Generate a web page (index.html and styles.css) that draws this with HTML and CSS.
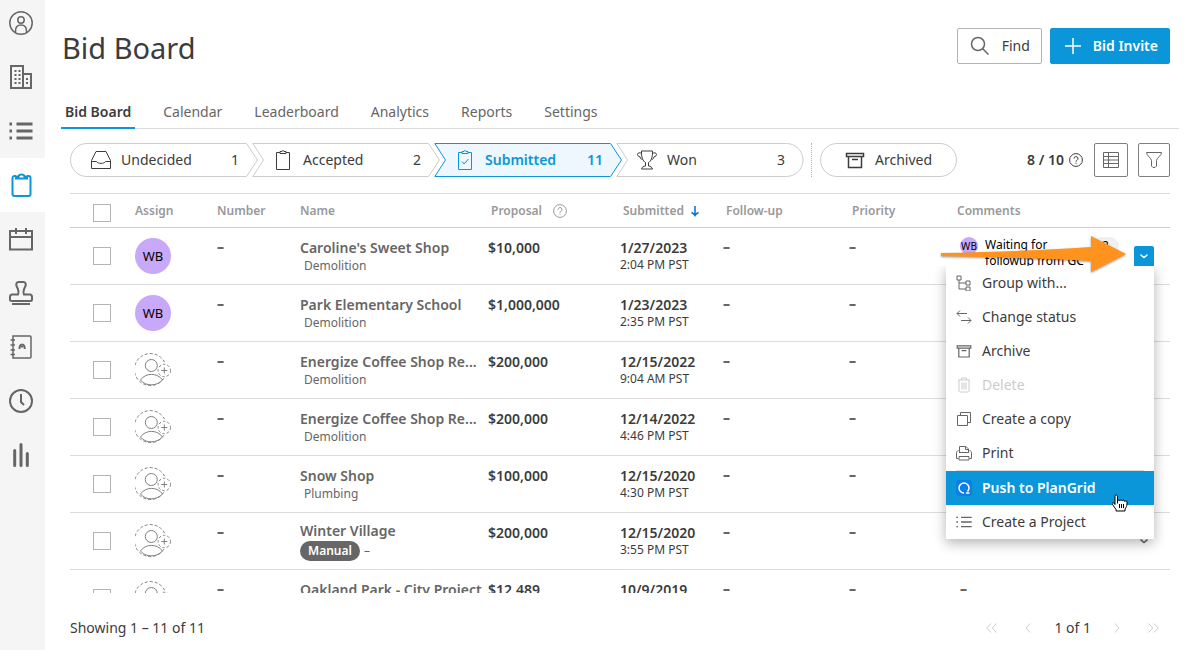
FILE: index.html
```
<!DOCTYPE html>
<html lang="en">
  <head>
    <meta charset="UTF-8" />
    <meta name="viewport" content="width=device-width, initial-scale=1.0" />
    <title>Bid Board</title>
    <link rel="stylesheet" href="styles.css">
  </head>

  <body>
    <!-- shared icons -->
    <svg class="sprite" aria-hidden="true">
      <symbol id="i-help" viewBox="0 0 14 14">
        <circle cx="7" cy="7" r="6.4" />
        <path d="M5 5.6a2 2 0 1 1 3 1.7c-.7.4-1 .7-1 1.4M7 9.8v1" />
      </symbol>
      <symbol id="i-person" viewBox="0 0 36 36">
        <path stroke-dasharray="3 2" d="M29.6 10.200A16 16 0 1 0 29 26" />
        <circle cx="16.300" cy="13.500" r="6" />
        <path d="M5.500 28c5-7.500 17-7.500 22 0M5.500 28c5 6.500 16 6.500 22 0" />
        <circle stroke-dasharray="2.500 2" cx="29.300" cy="18.500" r="6.200" />
        <path d="M29.300 15.500v6M26.300 18.500h6" />
      </symbol>
      <symbol id="i-chevron" viewBox="0 0 10 10">
        <path d="M1.500 3.700 5 6.500l3.500-2.800" />
      </symbol>
      <symbol id="i-archive" viewBox="0 0 20 20">
        <path d="M1.500 3.500h17v3h-17zM3.500 6.500v11h13v-11M7 9.500h6" />
      </symbol>
      <symbol id="i-list" viewBox="0 0 24 24">
        <path d="M7.500 5h16M7.500 12h16M7.500 19h16M.5 5h2.500M.5 12h2.500M.5 19h2.500" />
      </symbol>
    </svg>

    <nav class="sidebar">
      <a href="#" aria-label="Account"><svg viewBox="0 0 24 24" class="thin"><circle cx="12" cy="12" r="11.200" /><circle cx="12" cy="9" r="3.200" /><path d="M6.500 21.500v-1.500c0-4 2.500-6 5.500-6s5.500 2 5.500 6v1.500" /></svg></a>
      <a href="#" aria-label="Companies"><svg viewBox="0 0 24 24"><path d="M2 1h12v22H2zM14 9h8v14h-8" /><path stroke-dasharray="2 2" d="M6.500 5v14M10.500 5v14M18 13v6" /></svg></a>
      <a href="#" aria-label="Lists"><svg class="list"><use href="#i-list" /></svg></a>
      <a href="#" aria-label="Bid Board" class="active"><svg viewBox="0 0 24 24"><path d="M7 3H5.500a2 2 0 0 0-2 2v16a2 2 0 0 0 2 2h14a2 2 0 0 0 2-2V5a2 2 0 0 0-2-2H18" /><path d="M7 5.500V3.500h2.500C10 .7 15 .7 15.500 3.500H18v2z" /></svg></a>
      <a href="#" aria-label="Calendar"><svg viewBox="0 0 24 24"><path d="M1 4h22v18.500H1zM1 10h22M7 1v6M17 1v6" /></svg></a>
      <a href="#" aria-label="Approvals"><svg viewBox="0 0 24 24"><path d="M9 13.500c1.500-3 .3-5-1.500-8.500-.8-2 .2-4 2-4h5c1.800 0 2.800 2 2 4-1.800 3.500-3 5.500-1.500 8.500h6c1.200 0 2 1 2 2.500v2.500c0 1-.8 1.500-2 1.500H3c-1.200 0-2-.5-2-1.500V16c0-1.500.8-2.500 2-2.500zM3 23h18" /></svg></a>
      <a href="#" aria-label="Contacts"><svg viewBox="0 0 24 24" class="thin"><path d="M4 1h17a1 1 0 0 1 1 1v20a1 1 0 0 1-1 1H4zM1.500 5h4.500M1.500 10h4.500M1.500 15h4.500M1.500 19.500h4.500" /><path stroke-width="2" d="M10.500 14c-.3-6 5.500-6 5.200 0M13 11v1.500" /></svg></a>
      <a href="#" aria-label="History"><svg viewBox="0 0 24 24"><circle cx="12" cy="12" r="11" /><path d="M12 5v8l3 3" /></svg></a>
      <a href="#" aria-label="Reports"><svg viewBox="0 0 24 24" class="thick"><path d="M5.700 7.500v15M12 1.500v21M18.300 10.500v12" /></svg></a>
    </nav>

    <div class="page">
      <header class="page-head">
        <h1>Bid Board</h1>
        <div class="head-actions">
          <button class="btn"><svg viewBox="0 0 20 20"><circle cx="8" cy="8" r="6.500" /><path d="m12.700 12.700 5.800 5.800" /></svg>Find</button>
          <button class="btn primary"><svg viewBox="0 0 20 20"><path d="M10 2v16M2 10h16" /></svg>Bid Invite</button>
        </div>
      </header>

      <nav class="tabs">
        <a href="#" class="active">Bid Board</a>
        <a href="#">Calendar</a>
        <a href="#">Leaderboard</a>
        <a href="#">Analytics</a>
        <a href="#">Reports</a>
        <a href="#">Settings</a>
      </nav>

      <div class="content">
        <div class="toolbar">
          <div class="stages">
            <button class="stage">
              <svg class="shape" viewBox="0 0 188 34" preserveAspectRatio="none"><path d="M17 .5H176.500L187.500 17 176.500 33.500H17A16.500 16.500 0 0 1 17 .5z" /></svg>
              <svg class="icon" viewBox="0 0 20 20"><path d="M.5 10.500 5 1.500h10l4.500 9v8H.5zM.5 11.500h5c1 2.500 8 2.500 9 0h5" /></svg>
              <span>Undecided</span><span class="count">1</span>
            </button>
            <button class="stage">
              <svg class="shape" viewBox="0 0 188 34" preserveAspectRatio="none"><path d="M.8 .5H176.500L187.500 17 176.500 33.500H.8L11.500 17z" /></svg>
              <svg class="icon" viewBox="0 0 20 20"><path d="M7 2.500H3.500v17h13v-17H13M7 1.500h2c0-1.300 2-1.300 2 0h2v2H7z" /></svg>
              <span>Accepted</span><span class="count">2</span>
            </button>
            <button class="stage current">
              <svg class="shape" viewBox="0 0 188 34" preserveAspectRatio="none"><path d="M.8 .5H176.500L187.500 17 176.500 33.500H.8L11.500 17z" /></svg>
              <svg class="icon" viewBox="0 0 20 20"><path d="M7 2.500H3.500v17h13v-17H13M7 1.500h2c0-1.300 2-1.300 2 0h2v2H7zM7 11.500l2 2.500 4.500-5" /></svg>
              <span>Submitted</span><span class="count">11</span>
            </button>
            <button class="stage">
              <svg class="shape" viewBox="0 0 188 34" preserveAspectRatio="none"><path d="M.8 .5H170.500A16.500 16.500 0 0 1 170.500 33.500H.8L11.500 17z" /></svg>
              <svg class="icon" viewBox="0 0 20 20"><path d="M4.500 1h11c.3 6-1.500 10.500-4 11.500v3.500c2 .3 3.500 1 4 3h-11c.5-2 2-2.700 4-3v-3.500C6 11.500 4.200 7 4.500 1zM4.500 3.500c-1.500-1.200-4-.8-4 1 0 2.500 3 1.500 3 3.500 0 1 1 1.500 2 1M15.500 3.500c1.500-1.200 4-.8 4 1 0 2.500-3 1.500-3 3.500 0 1-1 1.500-2 1" /></svg>
              <span>Won</span><span class="count">3</span>
            </button>
          </div>
          <button class="archived"><svg class="icon"><use href="#i-archive" /></svg>Archived</button>
          <div class="tools">
            <span class="usage">8 / 10</span>
            <svg class="help"><use href="#i-help" /></svg>
            <button class="tool" aria-label="Columns"><svg viewBox="0 0 18 18"><path d="M1.500 1.500h15v15h-15zM6.500 1.500v15M1.500 5.500h15M1.500 9h15M1.500 12.500h15" /></svg></button>
            <button class="tool filter" aria-label="Filter"><svg viewBox="0 0 18 18"><path d="M1.500 1.500h15c.2 3-5 5.500-5 8v5.500l-1.500 1.500H8l-1.500-1.500V9.500c0-2.500-5.200-5-5-8z" /></svg></button>
          </div>
        </div>

        <div class="table-wrap">
          <table>
            <colgroup>
              <col class="c-check"><col class="c-assign"><col class="c-number"><col class="c-name"><col class="c-proposal"><col class="c-submitted"><col class="c-follow"><col class="c-priority"><col class="c-comments"><col class="c-menu">
            </colgroup>
            <thead>
              <tr>
                <th class="check"><input type="checkbox" aria-label="Select all"></th>
                <th>Assign</th>
                <th>Number</th>
                <th>Name</th>
                <th class="inset">Proposal <svg class="help"><use href="#i-help" /></svg></th>
                <th class="inset">Submitted <svg class="sort" viewBox="0 0 10 12"><path d="M5 1v9.500M1.500 7.500c1.500.7 2.800 1.700 3.500 3 .7-1.300 2-2.300 3.500-3" /></svg></th>
                <th class="inset">Follow-up</th>
                <th class="inset">Priority</th>
                <th>Comments</th>
                <th></th>
              </tr>
            </thead>
            <tbody>
              <tr>
                <td class="check"><input type="checkbox" aria-label="Select Caroline's Sweet Shop"></td>
                <td class="assign"><span class="avatar">WB</span></td>
                <td class="muted none">–</td>
                <td class="name"><a href="#">Caroline's Sweet Shop</a><small>Demolition</small></td>
                <td>$10,000</td>
                <td>1/27/2023<small>2:04 PM PST</small></td>
                <td class="muted none">–</td>
                <td class="muted none">–</td>
                <td class="comments">
                  <div class="comment">
                    <span class="avatar small">WB</span>
                    <span class="comment-text">Waiting for followup from GC</span>
                    <span class="badge">2</span>
                  </div>
                </td>
                <td class="row-menu">
                  <div class="dropdown">
                    <button class="toggle open" aria-label="Row actions"><svg><use href="#i-chevron" /></svg></button>
                    <div class="menu">
                      <button><svg viewBox="0 0 16 16"><path d="M1 1h4v4H1zM3 5v9h7M3 8h7M10 6h4v4h-4zM10 12h4v4h-4z" /></svg>Group with...</button>
                      <button><svg viewBox="0 0 16 16"><path d="M4 1.500l-3 3 3 3M1 4.500h10M12 8.500l3 3-3 3M15 11.500H5" /></svg>Change status</button>
                      <button><svg class="archive"><use href="#i-archive" /></svg>Archive</button>
                      <button disabled><svg viewBox="0 0 16 16"><path d="M2 3h12M5.500 3V1h5v2M3 3v10.500c0 1 .5 1.500 1.500 1.500h7c1 0 1.500-.5 1.500-1.500V3M6 5.500v7M8 5.500v7M10 5.500v7" /></svg>Delete</button>
                      <button><svg viewBox="0 0 16 16"><path d="M1.500 4.500h10v10h-10zM4.500 4.500v-3h10v10h-3" /></svg>Create a copy</button>
                      <button><svg viewBox="0 0 16 16"><path d="M3.500 7V1.500H10l2.500 2.500v3M9.500 1.500v3h3M3 7.500h10M2.500 5.500C1 6 .5 7 .5 8v5.500h2M13.500 5.500C15 6 15.500 7 15.500 8v5.500h-2M3 11.500h10v3.500H3z" /></svg>Print</button>
                      <hr>
                      <button class="selected"><svg viewBox="0 0 16 16"><rect width="16" height="16" rx="3" fill="#0b7fe6" stroke="none" /><path stroke-width="1.500" d="M8 13A5 5 0 1 1 13 8c0 1.500-.5 2.500-1.500 3.500M10 13h3.500" /></svg>Push to PlanGrid</button>
                      <button><svg class="list"><use href="#i-list" /></svg>Create a Project</button>
                    </div>
                    <svg class="pointer" viewBox="0 0 186 36"><path d="M0 17 C55 16 105 14 150 11V0L185 18 150 36V25C105 23 55 21 0 20z" /></svg>
                    <svg class="cursor" viewBox="0 0 16 18"><path d="M5.500 9.500V2.500c0-2-2.500-2-2.500 0v8L1.800 9c-1-1-2.200 0-1.500 1.200L4 15.500V17h9v-2c1-1.500 2-3 2-5V8c0-1.500-2-1.500-2.300-.5 0-1.500-2-1.800-2.500-.5C10 5.700 8.200 5.500 7.800 6.800 7.500 6 6 6 5.500 6.500" /><path d="M7.500 10v4M9.500 10v4M11.500 10v4" /></svg>
                  </div>
                </td>
              </tr>
              <tr>
                <td class="check"><input type="checkbox" aria-label="Select Park Elementary School"></td>
                <td class="assign"><span class="avatar">WB</span></td>
                <td class="muted none">–</td>
                <td class="name"><a href="#">Park Elementary School</a><small>Demolition</small></td>
                <td>$1,000,000</td>
                <td>1/23/2023<small>2:35 PM PST</small></td>
                <td class="muted none">–</td>
                <td class="muted none">–</td>
                <td class="muted none inset">–</td>
                <td class="row-menu"><button class="toggle" aria-label="Row actions"><svg><use href="#i-chevron" /></svg></button></td>
              </tr>
              <tr>
                <td class="check"><input type="checkbox" aria-label="Select Energize Coffee Shop"></td>
                <td class="assign"><svg class="person"><use href="#i-person" /></svg></td>
                <td class="muted none">–</td>
                <td class="name"><a href="#">Energize Coffee Shop Re...</a><small>Demolition</small></td>
                <td>$200,000</td>
                <td>12/15/2022<small>9:04 AM PST</small></td>
                <td class="muted none">–</td>
                <td class="muted none">–</td>
                <td class="muted none inset">–</td>
                <td class="row-menu"><button class="toggle" aria-label="Row actions"><svg><use href="#i-chevron" /></svg></button></td>
              </tr>
              <tr>
                <td class="check"><input type="checkbox" aria-label="Select Energize Coffee Shop"></td>
                <td class="assign"><svg class="person"><use href="#i-person" /></svg></td>
                <td class="muted none">–</td>
                <td class="name"><a href="#">Energize Coffee Shop Re...</a><small>Demolition</small></td>
                <td>$200,000</td>
                <td>12/14/2022<small>4:46 PM PST</small></td>
                <td class="muted none">–</td>
                <td class="muted none">–</td>
                <td class="muted none inset">–</td>
                <td class="row-menu"><button class="toggle" aria-label="Row actions"><svg><use href="#i-chevron" /></svg></button></td>
              </tr>
              <tr>
                <td class="check"><input type="checkbox" aria-label="Select Snow Shop"></td>
                <td class="assign"><svg class="person"><use href="#i-person" /></svg></td>
                <td class="muted none">–</td>
                <td class="name"><a href="#">Snow Shop</a><small>Plumbing</small></td>
                <td>$100,000</td>
                <td>12/15/2020<small>4:30 PM PST</small></td>
                <td class="muted none">–</td>
                <td class="muted none">–</td>
                <td class="muted none inset">–</td>
                <td class="row-menu"><button class="toggle" aria-label="Row actions"><svg><use href="#i-chevron" /></svg></button></td>
              </tr>
              <tr>
                <td class="check"><input type="checkbox" aria-label="Select Winter Village"></td>
                <td class="assign"><svg class="person"><use href="#i-person" /></svg></td>
                <td class="muted none">–</td>
                <td class="name tagged"><a href="#">Winter Village</a><small><span class="tag">Manual</span> –</small></td>
                <td>$200,000</td>
                <td>12/15/2020<small>3:55 PM PST</small></td>
                <td class="muted none">–</td>
                <td class="muted none">–</td>
                <td class="muted none inset">–</td>
                <td class="row-menu"><button class="toggle" aria-label="Row actions"><svg><use href="#i-chevron" /></svg></button></td>
              </tr>
              <tr>
                <td class="check"><input type="checkbox" aria-label="Select Oakland Park"></td>
                <td class="assign"><svg class="person"><use href="#i-person" /></svg></td>
                <td class="muted none">–</td>
                <td class="name"><a href="#">Oakland Park - City Project</a></td>
                <td>$12,489</td>
                <td>10/9/2019</td>
                <td class="muted none">–</td>
                <td class="muted none">–</td>
                <td class="muted none inset">–</td>
                <td class="row-menu"></td>
              </tr>
            </tbody>
          </table>
        </div>

        <footer class="pager">
          <span>Showing 1 – 11 of 11</span>
          <div class="pages">
            <button aria-label="First page" disabled><svg viewBox="0 0 12 12"><path d="M5 1.500.8 6 5 10.500M10.500 1.500 6.300 6l4.200 4.500" /></svg></button>
            <button aria-label="Previous page" disabled><svg viewBox="0 0 12 12"><path d="M8 1.500 4 6l4 4.500" /></svg></button>
            <span>1 of 1</span>
            <button aria-label="Next page" disabled><svg viewBox="0 0 12 12"><path d="m4 1.500 4 4.500-4 4.500" /></svg></button>
            <button aria-label="Last page" disabled><svg viewBox="0 0 12 12"><path d="M1.500 1.500 5.700 6l-4.200 4.500M7 1.500 11.200 6 7 10.500" /></svg></button>
          </div>
        </footer>
      </div>
    </div>
  </body>
</html>
```
FILE: styles.css
```
* {
  margin: 0;
  padding: 0;
  box-sizing: border-box;
}
:root {
  --blue: #0a96d9;
  --text: #3c3c3c;
  --muted: #666;
  --line: #dcdcdc;
  --line-dark: #ccc;
}
body {
  display: flex;
  height: 100vh;
  overflow: hidden;
  background: #fff;
  color: var(--text);
  font-family: "Noto Sans", "Open Sans", sans-serif;
  font-size: 14px;
  line-height: 18px;
}
a {
  color: inherit;
  text-decoration: none;
}
button {
  font: inherit;
  color: inherit;
  background: none;
  border: 0;
  cursor: pointer;
}
svg {
  display: block;
  flex: none;
  fill: none;
  stroke: currentColor;
}
.sprite {
  position: absolute;
  width: 0;
  height: 0;
}

/* sidebar */
.sidebar {
  flex: none;
  width: 45px;
  background: #f5f5f5;
  color: var(--muted);
}
.sidebar a {
  display: flex;
  align-items: center;
  height: 54px;
  padding-left: 9px;
}
.sidebar a:first-child {
  height: 50px;
  padding-bottom: 4px;
}
.sidebar a.active {
  background: #fff;
  color: var(--blue);
}
.sidebar svg {
  width: 24px;
  height: 24px;
  stroke-width: 2;
}
.sidebar svg.thin {
  stroke-width: 1.5;
}
.sidebar svg.list {
  stroke-width: 3;
}
.sidebar svg.thick {
  stroke-width: 3;
  stroke-linecap: round;
}

/* header */
.page {
  display: flex;
  flex: 1;
  flex-direction: column;
  min-width: 0;
  padding: 28px 13px 0 16px;
}
.page-head {
  display: flex;
  align-items: flex-start;
  justify-content: space-between;
  padding-right: 9px;
}
h1 {
  padding-left: 1px;
  font-size: 29px;
  font-weight: 400;
  line-height: 40px;
}
.head-actions {
  display: flex;
  gap: 8px;
}
.btn {
  display: flex;
  align-items: center;
  gap: 12px;
  height: 36px;
  padding: 0 11px 0 12px;
  border: 1px solid #b4b4b4;
  border-radius: 2px;
}
.btn svg {
  width: 20px;
  height: 20px;
  color: var(--muted);
  stroke-width: 1.5;
}
.btn.primary {
  gap: 10px;
  border-color: var(--blue);
  background: var(--blue);
  color: #fff;
  font-weight: 600;
}
.btn.primary svg {
  color: #fff;
}
.tabs {
  display: flex;
  gap: 24px;
  margin-top: 27px;
  border-bottom: 1px solid var(--line);
  color: var(--muted);
}
.tabs a {
  height: 34px;
  padding: 8px 4px 0;
  margin-bottom: -1px;
}
.tabs a.active {
  border-bottom: 2px solid var(--blue);
  color: var(--text);
  font-weight: 600;
}

/* toolbar */
.content {
  display: flex;
  flex: 1;
  flex-direction: column;
  min-height: 0;
  padding: 14px 9px 0;
}
.toolbar {
  display: flex;
  height: 34px;
  margin-bottom: 16px;
}
.stages {
  display: flex;
  padding-right: 7px;
  border-right: 1px dotted #b4b4b4;
}
.stage {
  position: relative;
  display: flex;
  align-items: center;
  gap: 10px;
  width: 188px;
  padding: 0 19px 0 21px;
}
.stage + .stage {
  margin-left: -6px;
}
.stage .shape {
  position: absolute;
  inset: 0;
  z-index: -1;
  width: 100%;
  height: 100%;
  color: var(--line-dark);
}
.icon {
  width: 20px;
  height: 20px;
}
.count {
  margin-left: auto;
}
.stage.current {
  color: var(--blue);
  font-weight: 600;
}
.stage.current .shape {
  fill: #eef7fd;
  color: var(--blue);
}
.archived {
  display: flex;
  align-items: center;
  gap: 10px;
  width: 137px;
  margin-left: 8px;
  padding-left: 24px;
  border: 1px solid var(--line-dark);
  border-radius: 17px;
}
.archived .icon {
  stroke-width: 1.5;
}
.tools {
  display: flex;
  align-items: center;
  margin-left: auto;
}
.usage {
  margin-right: 5px;
  font-weight: 600;
}
.help {
  width: 14px;
  height: 14px;
}
.tool {
  display: flex;
  align-items: center;
  justify-content: center;
  width: 34px;
  height: 34px;
  margin-left: 11px;
  border: 1px solid #808080;
  border-radius: 2px;
  color: var(--muted);
}
.tool.filter {
  width: 32px;
  margin-left: 10px;
}
.tool svg {
  width: 18px;
  height: 18px;
}

/* table */
.table-wrap {
  flex: 1;
  min-height: 0;
  overflow: hidden;
  border-top: 1px solid var(--line);
}
table {
  width: 100%;
  table-layout: fixed;
  border-collapse: separate;
  border-spacing: 0;
}
.c-check { width: 65px; }
.c-assign { width: 82px; }
.c-number { width: 83px; }
.c-name { width: 188px; }
.c-proposal { width: 132px; }
.c-submitted { width: 103px; }
.c-follow { width: 126px; }
.c-priority { width: 108px; }
.c-menu { width: 36px; }
th {
  height: 34px;
  border-bottom: 1px solid var(--line-dark);
  color: #999;
  font-size: 12px;
  font-weight: 600;
  text-align: left;
  white-space: nowrap;
}
th.inset,
td.inset {
  padding-left: 3px;
}
th svg {
  display: inline-block;
  vertical-align: middle;
}
th .help {
  margin-left: 8px;
}
.sort {
  width: 10px;
  height: 12px;
  margin-left: 3px;
  color: #0672c4;
  stroke-width: 1.5;
}
td {
  height: 57px;
  padding-top: 11px;
  border-bottom: 1px solid var(--line);
  font-weight: 600;
  vertical-align: top;
  white-space: nowrap;
}
td.muted,
td.name {
  color: var(--muted);
}
td.none {
  padding-top: 10px;
  font-weight: 900;
}
td.name.tagged {
  padding-top: 9px;
}
td small {
  display: block;
  font-size: 12px;
  font-weight: 400;
  line-height: 16px;
}
td.name small {
  padding-left: 4px;
  line-height: 18px;
}
td.tagged small {
  display: flex;
  align-items: center;
  gap: 4px;
  padding-top: 1px;
}
td.name.tagged small {
  padding-left: 0;
  line-height: 20px;
}
.tag {
  padding: 0 8px;
  border-radius: 10px;
  background: var(--muted);
  color: #fff;
  font-weight: 600;
}
td.check,
td.assign,
td.row-menu {
  padding-top: 0;
  vertical-align: middle;
}
.check {
  padding-left: 23px;
}
th.check {
  padding-top: 4px;
}
input[type="checkbox"] {
  display: block;
  width: 18px;
  height: 18px;
  appearance: none;
  border: 1px solid #b4b4b4;
  background: #fff;
}
.avatar {
  display: flex;
  flex: none;
  align-items: center;
  justify-content: center;
  width: 36px;
  height: 36px;
  border-radius: 50%;
  background: #c8a8f8;
  color: #000;
  font-size: 13px;
  font-weight: 400;
}
.avatar.small {
  width: 18px;
  height: 18px;
  font-size: 10px;
}
.person {
  width: 36px;
  height: 36px;
  color: #808080;
}
td.comments {
  padding: 9px 0 0 3px;
}
.comment {
  display: flex;
  gap: 7px;
  color: #000;
  font-size: 12px;
  font-weight: 400;
  line-height: 16px;
  white-space: normal;
}
.comment-text {
  width: 100px;
}
.badge {
  width: 27px;
  height: 18px;
  border-radius: 9px;
  background: #f0f0f0;
  line-height: 18px;
  text-align: center;
}

/* row actions */
.dropdown {
  position: relative;
  width: 20px;
}
.toggle {
  display: flex;
  align-items: center;
  justify-content: center;
  width: 20px;
  height: 20px;
  color: var(--muted);
}
.toggle.open {
  border-radius: 2px 2px 0 0;
  background: var(--blue);
  color: #fff;
}
.toggle svg {
  width: 10px;
  height: 10px;
  stroke-width: 1.5;
}
.menu {
  position: absolute;
  top: 100%;
  right: 0;
  z-index: 2;
  width: 208px;
  background: #fff;
  box-shadow: 0 4px 12px rgba(0, 0, 0, 0.3);
  clip-path: inset(0 -20px -20px -20px);
}
.menu button {
  display: flex;
  align-items: center;
  gap: 10px;
  width: 100%;
  height: 34px;
  padding-left: 10px;
  font-weight: 400;
}
.menu svg {
  width: 16px;
  height: 16px;
  color: var(--muted);
}
.menu svg.list {
  stroke-width: 2;
}
.menu svg.archive {
  stroke-width: 1.5;
}
.menu button:disabled,
.menu button:disabled svg {
  color: #ccc;
}
.menu .selected,
.menu .selected svg {
  background: var(--blue);
  color: #fff;
}
.menu .selected {
  font-weight: 600;
}
.menu hr {
  height: 1px;
  margin: 0 10px;
  border: 0;
  background: var(--line);
}
.pointer {
  position: absolute;
  top: -10px;
  right: 27px;
  z-index: 3;
  width: 186px;
  height: 36px;
  fill: #ff931e;
  stroke: none;
  filter: drop-shadow(0 1px 1px rgba(0, 0, 0, 0.4));
}
.cursor {
  position: absolute;
  top: 248px;
  right: 26px;
  z-index: 3;
  width: 16px;
  height: 18px;
  fill: #fff;
  stroke: #000;
}

/* footer */
.pager {
  display: flex;
  align-items: flex-start;
  justify-content: space-between;
  height: 57px;
  padding: 13px 11px 0 0;
  line-height: 44px;
}
.pages {
  display: flex;
  align-items: center;
  gap: 24px;
  height: 44px;
}
.pages span {
  margin: 0 -4px;
}
.pages button {
  color: var(--line-dark);
}
.pages svg {
  width: 12px;
  height: 12px;
}
```
